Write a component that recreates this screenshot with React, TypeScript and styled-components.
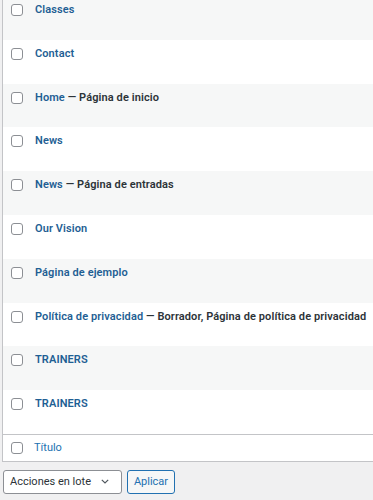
import React from 'react';
import styled, { createGlobalStyle } from 'styled-components';

interface PageRow {
  title: string;
  state?: string;
}

const pages: PageRow[] = [
  { title: 'Classes' },
  { title: 'Contact' },
  { title: 'Home', state: 'Página de inicio' },
  { title: 'News' },
  { title: 'News', state: 'Página de entradas' },
  { title: 'Our Vision' },
  { title: 'Página de ejemplo' },
  { title: 'Política de privacidad', state: 'Borrador, Página de política de privacidad' },
  { title: 'TRAINERS' },
  { title: 'TRAINERS' },
];

const GlobalStyle = createGlobalStyle`
  html, body {
    margin: 0;
    padding: 0;
    background: #f0f0f1;
    font-family: Roboto, "Liberation Sans", Arial, sans-serif;
    color: #2c3338;
  }
`;

const Screen = styled.div`
  width: 373px;
  height: 500px;
  overflow: hidden;
  padding-left: 2px;
  box-sizing: border-box;
`;

const Table = styled.div`
  border-left: 1px solid #c3c4c7;
  border-bottom: 1px solid #c3c4c7;
  background: #fff;
  width: 400px;
`;

const Body = styled.div`
  margin-top: -4px;
`;

const Row = styled.div<{ $striped: boolean }>`
  height: 43.8px;
  box-sizing: border-box;
  padding: 6px 0 0 8px;
  display: flex;
  align-items: flex-start;
  gap: 12px;
  background: ${(p) => (p.$striped ? '#f6f7f7' : '#fff')};
`;

const Check = styled.span<{ $top?: number }>`
  flex: none;
  width: 12px;
  height: 12px;
  margin-top: ${(p) => p.$top ?? 2}px;
  box-sizing: border-box;
  border: 1px solid #8c8f94;
  border-radius: 3px;
  background: #fff;
`;

const Cell = styled.div`
  font-size: 11px;
  line-height: 15px;
  font-weight: 600;
  letter-spacing: 0.1px;
  white-space: nowrap;
  color: #2c3338;
`;

const RowTitle = styled.a`
  color: #1f5f94;
  text-decoration: none;
`;

const FooterRow = styled.div`
  height: 27px;
  box-sizing: border-box;
  border-top: 1px solid #c3c4c7;
  padding-left: 8px;
  display: flex;
  align-items: center;
  gap: 11px;
`;

const SortLink = styled.a`
  font-size: 11px;
  color: #2271b1;
  text-decoration: none;
`;

const BulkBar = styled.div`
  display: flex;
  gap: 5px;
  margin: 8px 0 0 1px;
`;

const SelectBox = styled.div`
  width: 119px;
  height: 24px;
  box-sizing: border-box;
  border: 1px solid #8c8f94;
  border-radius: 3px;
  background: #fff;
  display: flex;
  align-items: center;
  justify-content: space-between;
  padding: 0 12px 0 6px;
  font-size: 11px;
  color: #2c3338;
`;

const ApplyButton = styled.button`
  height: 24px;
  width: 48px;
  padding: 0;
  border: 1px solid #2271b1;
  border-radius: 3px;
  background: #f6f7f7;
  color: #2271b1;
  font-family: inherit;
  font-size: 11px;
`;

export default function App() {
  return (
    <>
      <GlobalStyle />
      <Screen>
        <Table>
          <Body>
            {pages.map((page, i) => (
              <Row key={i} $striped={i % 2 === 0}>
                <Check />
                <Cell>
                  <RowTitle href="#">{page.title}</RowTitle>
                  {page.state && <> — {page.state}</>}
                </Cell>
              </Row>
            ))}
          </Body>
          <FooterRow>
            <Check $top={0} />
            <SortLink href="#">Título</SortLink>
          </FooterRow>
        </Table>
        <BulkBar>
          <SelectBox>
            <span>Acciones en lote</span>
            <svg width="8" height="5" viewBox="0 0 8 5">
              <path d="M0.8 0.8l3.2 3.2L7.2 0.8" fill="none" stroke="#50575e" strokeWidth="1.2" />
            </svg>
          </SelectBox>
          <ApplyButton>Aplicar</ApplyButton>
        </BulkBar>
      </Screen>
    </>
  );
}
